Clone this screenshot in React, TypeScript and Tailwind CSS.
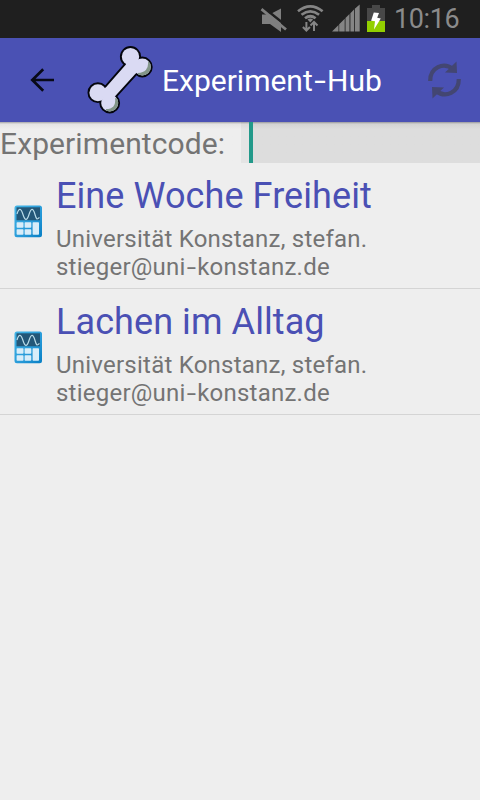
interface Experiment {
  title: string
  contact: string[]
}

const EXPERIMENTS: Experiment[] = [
  { title: 'Eine Woche Freiheit', contact: ['Universität Konstanz, stefan.', 'stieger@uni-konstanz.de'] },
  { title: 'Lachen im Alltag', contact: ['Universität Konstanz, stefan.', 'stieger@uni-konstanz.de'] },
]

/** Renders text with its hyphens stretched to the wider dash of the app's type. */
function WideHyphens({ text }: { text: string }) {
  return text.split('-').map((part, i) => (
    <span key={i}>
      {i > 0 && <span className="mx-[0.1em] inline-block scale-x-140">-</span>}
      {part}
    </span>
  ))
}

function StatusIcons() {
  return (
    <svg className="h-[38px] w-[130px] shrink-0" viewBox="260 0 130 38" aria-hidden="true">
      {/* muted speaker */}
      <path d="M262 14.500h7.500L281 8.500v23.500L270 24h-8z" fill="#7f7f7f" />
      <path d="M262 6.500L288 27" stroke="#1f1f1f" strokeWidth="2.500" />
      <path d="M261.500 9.200L286 29.500" stroke="#7f7f7f" strokeWidth="2.800" />
      {/* wifi with transfer arrows */}
      <g fill="none" stroke="#858585" strokeWidth="2.700">
        <path d="M298 11.200Q310.300 1.500 322.600 11.200" />
        <path d="M301.500 14.800Q310.300 8 319.100 14.800" />
        <path d="M305 18.300Q310.300 14.200 315.600 18.300" />
        <path d="M307.500 19.500L310.300 22.500L313.100 19.500Q310.300 17.500 307.500 19.500z" fill="#858585" stroke="none" />
        <path d="M306.400 22v8M302.900 27l3.500 3.500 3.500-3.500" strokeWidth="2" />
        <path d="M314 31v-8M310.500 25.500L314 22l3.500 3.500" strokeWidth="2" />
      </g>
      {/* signal strength */}
      <path
        d="M332 31.500L338.500 25v6.500zM339.200 24.300L344.700 18.800v12.700h-5.500zM345.500 18l4-4v17.500h-4zM350.400 13.200l3.600-3.600v21.900h-3.600zM354.800 8.800l4.900-4.300v27h-4.900z"
        fill="#858585"
      />
      {/* charging battery */}
      <path d="M372 5h8v3h5v13h-18V8h5z" fill="#484848" />
      <path d="M367 21h18v11h-18z" fill="#92cf00" />
      <path d="M373.800 12.500L379 13l-1.800 4.800 3.600 0.700L374 29.500l1-8.200-3.900-0.600z" fill="#fff" />
    </svg>
  )
}

function BackArrow() {
  return (
    <svg className="ml-[29px] h-[28px] w-[26px] shrink-0" viewBox="0 0 26 28" fill="none" stroke="#080a18" strokeWidth="2.700" aria-hidden="true">
      <path d="M25 14H3.500M14.200 3.200L3.300 14l10.900 10.800" />
    </svg>
  )
}

function BoneShape() {
  return (
    <>
      <circle cx="46.500" cy="12.700" r="8.700" />
      <circle cx="58.300" cy="23" r="8.500" />
      <circle cx="13.900" cy="48.700" r="8.500" />
      <circle cx="25.700" cy="59" r="8.500" />
      <path d="M46.500 12.700L58.300 23L51 30.200L30.800 52.500L25.700 59L13.900 48.700L22 43.300L41.500 21z" />
    </>
  )
}

function BoneLogo() {
  return (
    <svg className="ml-[29px] h-[72px] w-[72px] shrink-0" viewBox="0 0 72 72" aria-hidden="true">
      <defs>
        <clipPath id="bone-lobes">
          <circle cx="58.300" cy="23" r="8.500" />
          <circle cx="25.700" cy="59" r="8.500" />
        </clipPath>
      </defs>
      <g fill="#04050d" stroke="#04050d" strokeWidth="3.800">
        <BoneShape />
      </g>
      <g fill="#dadaf3">
        <BoneShape />
      </g>
      {/* shaded edge on the lower right of each end */}
      <g clipPath="url(#bone-lobes)" fill="none" stroke="#829588" strokeWidth="5">
        <path d="M66.500 17C67.500 27 62 31 54 31.500" />
        <path d="M33.500 54C34.800 63 30 67.500 22 67.500" />
      </g>
    </svg>
  )
}

function RefreshIcon() {
  return (
    <svg className="ml-auto mr-[18px] h-[40px] w-[36px] shrink-0" viewBox="426 60 36 40" aria-hidden="true">
      <g fill="none" stroke="#434672" strokeWidth="4.200">
        <path d="M430.200 81C430 67.500 443.500 61.500 453 69" />
        <path d="M458.800 79C459 92.500 445.500 98.500 436 91" />
      </g>
      <path d="M456.500 61.500L457 73L445 72.500z" fill="#434672" />
      <path d="M432.500 98.500L432 87L444 87.500z" fill="#434672" />
    </svg>
  )
}

function CalculatorIcon() {
  return (
    <svg className="h-[33px] w-[29px]" viewBox="0 0 29 33" aria-hidden="true">
      <defs>
        <linearGradient id="calc-body" x1="0" y1="0" x2="1" y2="1">
          <stop offset="0" stopColor="#43b5e6" />
          <stop offset="0.600" stopColor="#2699d8" />
          <stop offset="1" stopColor="#087fc4" />
        </linearGradient>
      </defs>
      <rect x="0.500" y="0.500" width="27.500" height="31.800" rx="2.500" fill="url(#calc-body)" />
      <path d="M2.500 2.300h23.500v13h-23.500z" fill="#235778" />
      <path d="M3 9C5 2.500 7 3 9 9.500S13 16 15 9.500S19 2.500 21 9.500S23.500 13.500 25.500 12.500" fill="none" stroke="#b9dce9" strokeWidth="1.200" />
      <g fill="#d8edf9">
        <rect x="2.600" y="17.200" width="6.900" height="5.500" rx="0.700" />
        <rect x="10.600" y="17.200" width="6.700" height="5.500" rx="0.700" />
        <rect x="2.600" y="24.300" width="6.900" height="5.500" rx="0.700" />
        <rect x="10.600" y="24.300" width="6.700" height="5.500" rx="0.700" />
        <rect x="18.600" y="17.200" width="6.400" height="12.600" rx="0.700" />
      </g>
    </svg>
  )
}

function ExperimentRow({ title, contact }: Experiment) {
  return (
    <li className="flex h-[126px] border-b border-[#d4d4d4]">
      <div className="w-[56px] shrink-0 pl-[14px] pt-[42px]">
        <CalculatorIcon />
      </div>
      <div className="whitespace-nowrap pt-[12px]">
        <h2 className="text-[36px] leading-[42px] tracking-[0.08px] text-[#4a50b4]">{title}</h2>
        <p className="pt-[8px] text-[24px] leading-[28px] tracking-[0.23px] text-[#747474]">
          {contact.map((line) => (
            <span key={line} className="block">
              <WideHyphens text={line} />
            </span>
          ))}
        </p>
      </div>
    </li>
  )
}

export default function App() {
  return (
    <div className="flex h-[800px] w-[480px] flex-col overflow-hidden bg-[#eeeeee] font-['Roboto',sans-serif]">
      <div className="flex h-[38px] shrink-0 items-center justify-end bg-[#1f1f1f] pr-[19px]">
        <StatusIcons />
        <span className="w-[71px] whitespace-nowrap pl-[4px] text-[27px] leading-[38px] tracking-[-0.4px] text-[#8b8b8b]">10:16</span>
      </div>

      <header className="flex h-[84px] shrink-0 items-center bg-[#4a51b4]">
        <BackArrow />
        <BoneLogo />
        <h1 className="ml-[6px] whitespace-nowrap pt-px text-[30px] leading-[36px] text-white">
          <WideHyphens text="Experiment-Hub" />
        </h1>
        <RefreshIcon />
      </header>

      <div className="flex h-[41px] shrink-0 bg-linear-to-b from-[#a5a5a8] via-[#e4e4e4] via-[5%] to-[#eeeeee] to-[18%]">
        <label htmlFor="code" className="w-[241px] whitespace-nowrap pt-[4px] text-[30px] leading-[36px] tracking-[0.1px] text-[#747474]">
          Experimentcode:
        </label>
        <div id="code" className="flex flex-1">
          <span className="w-[8px] bg-black/4" />
          <span className="w-[4px] bg-[#22998a]" />
          <span className="flex-1 bg-black/7" />
        </div>
      </div>

      <ul>
        {EXPERIMENTS.map((experiment) => (
          <ExperimentRow key={experiment.title} {...experiment} />
        ))}
      </ul>
    </div>
  )
}
